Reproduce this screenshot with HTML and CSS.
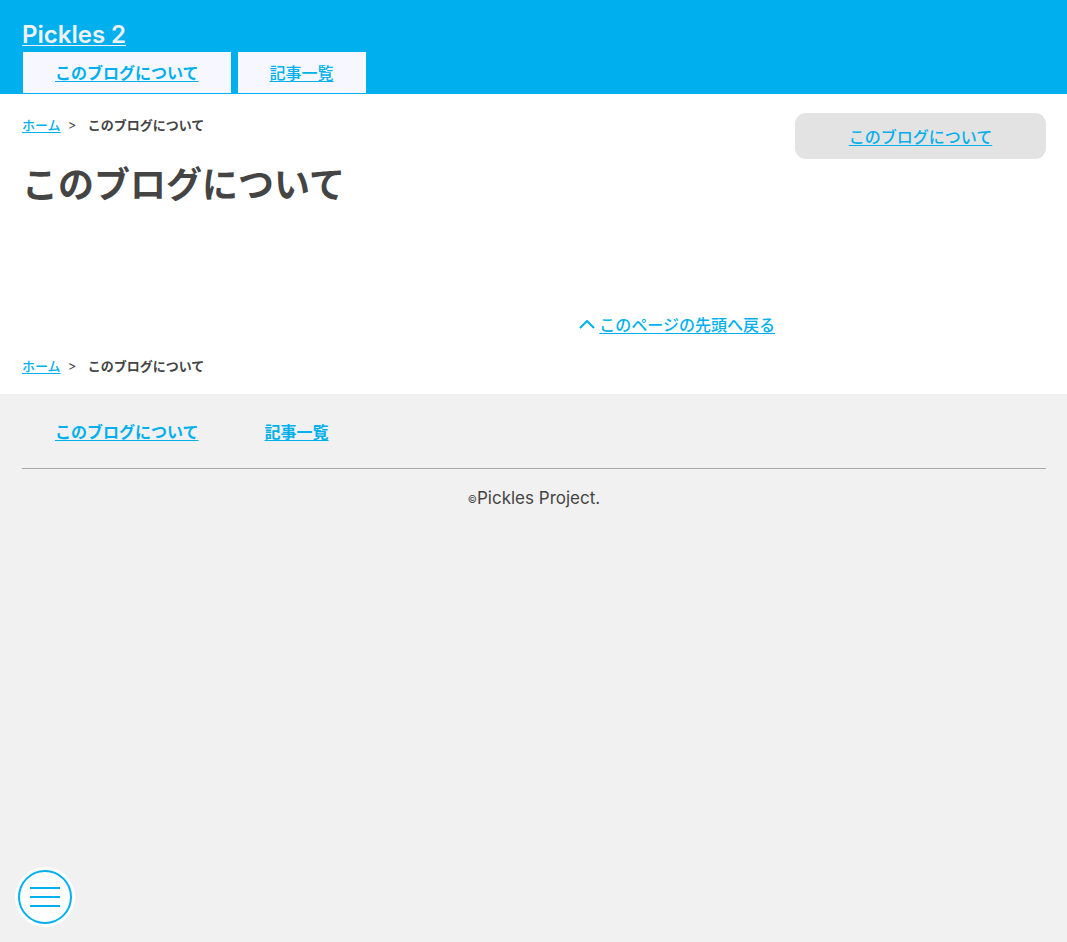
FILE: index.html
```html
<!DOCTYPE html>
<html lang="ja">
<head>
<meta charset="utf-8">
<meta name="viewport" content="width=device-width, initial-scale=1">
<title>このブログについて | Pickles 2</title>
<link rel="stylesheet" href="styles.css">
</head>
<body>
<header class="header" id="top">
  <a class="logo" href="#">Pickles 2</a>
  <nav class="global-nav">
    <a class="tab current" href="#">このブログについて</a>
    <a class="tab" href="#">記事一覧</a>
  </nav>
</header>
<div class="middle">
  <div class="columns">
    <main class="main">
      <nav class="breadcrumb"><a href="#">ホーム</a><span class="separator">&gt;</span><strong>このブログについて</strong></nav>
      <h1 class="title">このブログについて</h1>
      <p class="back"><a href="#top"><svg class="chevron" width="16" height="10" viewBox="0 0 16 10" aria-hidden="true"><path d="M1 8 8 1l7 7"/></svg><span>このページの先頭へ戻る</span></a></p>
    </main>
    <aside class="side"><a href="#">このブログについて</a></aside>
  </div>
  <nav class="breadcrumb"><a href="#">ホーム</a><span class="separator">&gt;</span><strong>このブログについて</strong></nav>
</div>
<footer class="footer">
  <nav class="footer-nav">
    <a href="#">このブログについて</a>
    <a href="#">記事一覧</a>
  </nav>
  <p class="copyright"><span class="mark">©</span>Pickles Project.</p>
</footer>
<button class="menu" type="button" aria-label="メニュー"><span></span><span></span><span></span></button>
</body>
</html>
```
FILE: styles.css
```css
* {
  box-sizing: border-box;
}
body {
  margin: 0;
  background: #f1f1f1;
  color: #444;
  font: 16px/24px Inter, "Noto Sans CJK JP", sans-serif;
}
a {
  color: #00b0ee;
  font-weight: 500;
  text-decoration-thickness: 1px;
  text-underline-offset: 2px;
}
.header {
  padding: 18px 22px 1px;
  background: #00b0ee;
}
.logo {
  display: block;
  width: fit-content;
  color: #f1f1f1;
  font-size: 24px;
  font-weight: 600;
  line-height: 34px;
}
.global-nav {
  display: flex;
  gap: 7px;
  padding-left: 1px;
}
.tab {
  padding: 9px 32px 8px;
  background: #f7f7ff;
}
.current {
  font-weight: 700;
}
.middle {
  padding: 19px 21px 16px 22px;
  background: #fff;
}
.columns {
  display: grid;
  grid-template-columns: 3fr 1fr;
  gap: 20px;
}
.side {
  align-self: start;
  padding: 12px 11px 10px;
  border-radius: 11px;
  background: #e3e3e3;
  text-align: center;
}
.breadcrumb {
  display: flex;
  font-size: 13px;
}
.separator {
  width: 27px;
  padding-left: 7px;
}
.title {
  margin: 20px 0 99px;
  font-size: 36px;
  line-height: 56px;
}
.back {
  margin: 0 0 17px;
  text-align: right;
}
.back a {
  display: inline-flex;
  gap: 4px;
  align-items: center;
  text-decoration: none;
}
.back span {
  text-decoration: underline 1px;
}
.chevron {
  fill: none;
  stroke: currentColor;
  stroke-width: 2;
}
.footer {
  padding: 0 21px 24px 22px;
}
.footer-nav {
  display: flex;
  gap: 66px;
  padding: 26px 33px 24px;
  border-bottom: 1px solid #aaa;
}
.footer-nav a {
  font-weight: 700;
}
.copyright {
  margin: 17px 0;
  font-size: 17px;
  text-align: center;
}
.mark {
  font-size: 10px;
  vertical-align: 1px;
}
.menu {
  position: fixed;
  bottom: 18px;
  left: 18px;
  display: flex;
  flex-direction: column;
  gap: 7px;
  align-items: center;
  justify-content: center;
  width: 54px;
  height: 54px;
  padding: 0;
  border: 2px solid #00b0ee;
  border-radius: 50%;
  background: #fff;
  box-shadow: 0 0 0 3px #fff;
}
.menu span {
  width: 30px;
  height: 2px;
  background: #00b0ee;
}
```
